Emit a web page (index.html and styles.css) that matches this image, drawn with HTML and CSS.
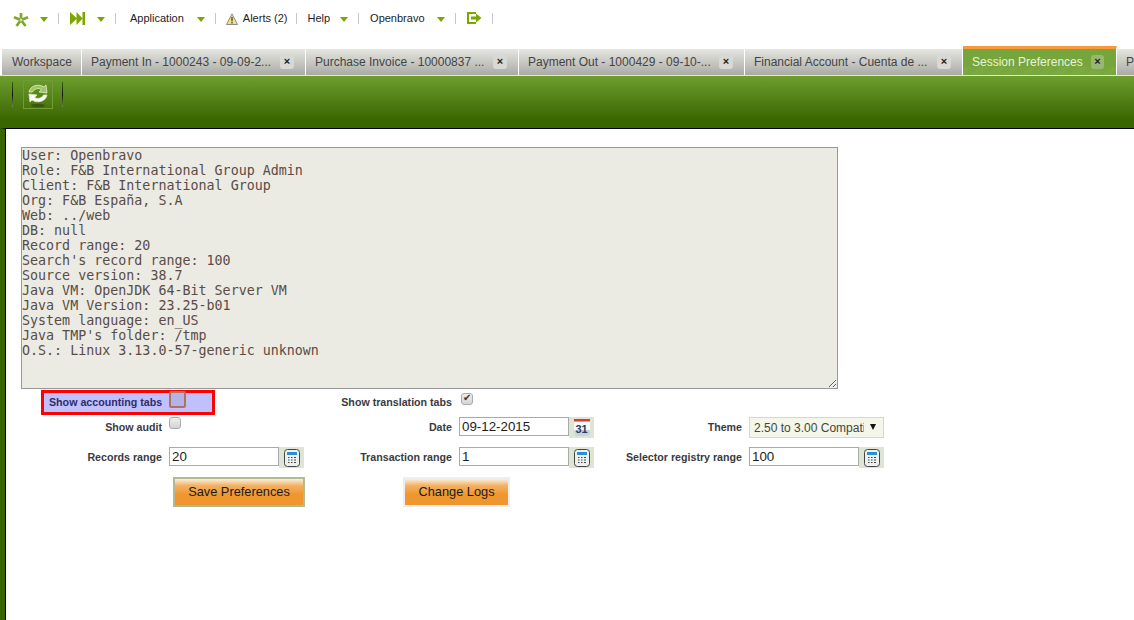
FILE: index.html
```html
<!DOCTYPE html>
<html lang="en">
<head>
<meta charset="UTF-8">
<title>Session Preferences</title>
<link rel="stylesheet" href="styles.css">
</head>
<body>
<nav class="topnav">
  <svg class="ico star" width="16" height="14" viewBox="0 0 16 14"><path d="M8 0v6.500M1 4.200l7 2.800M15 4.200L8 7M3.500 13L8 7M12.500 13L8 7" stroke="#7fa82a" stroke-width="2.700"/><circle cx="8" cy="7" r="1.400" fill="#cfe0a0"/></svg>
  <i class="caret c1"></i><i class="sep s1"></i>
  <svg class="ico ff" width="15" height="13" viewBox="0 0 15 13"><path d="M0 0l7 6.500L0 13zM6.500 0l6 6.500-6 6.500zM12.500 0H15v13h-2.500z" fill="#7ba600"/></svg>
  <i class="caret c2"></i><i class="sep s2"></i>
  <span class="nav-text app">Application</span>
  <i class="caret c3"></i><i class="sep s3"></i>
  <svg class="ico warn" width="12" height="12" viewBox="0 0 12 12"><path d="M6 .8L11.500 11.500H.5z" fill="#f3e08a" stroke="#8c8c80"/><path d="M6 4v4.200M6 9v1.400" stroke="#333" stroke-width="1.200"/></svg>
  <span class="nav-text alerts">Alerts (2)</span>
  <i class="sep s4"></i>
  <span class="nav-text help">Help</span>
  <i class="caret c4"></i><i class="sep s5"></i>
  <span class="nav-text ob">Openbravo</span>
  <i class="caret c5"></i><i class="sep s6"></i>
  <svg class="ico exit" width="15" height="12" viewBox="0 0 15 12"><path d="M9 1H1v10h8" fill="none" stroke="#7ba600" stroke-width="2.200"/><path d="M4 4.500h5V1.500L14.500 6 9 10.500v-3H4z" fill="#7ba600"/></svg>
  <i class="sep s7"></i>
</nav>

<div class="tabs">
  <div class="tab first"><span>Workspace</span></div>
  <div class="tab w1"><span>Payment In - 1000243 - 09-09-2...</span><b class="close">×</b></div>
  <div class="tab w2"><span>Purchase Invoice - 10000837 ...</span><b class="close">×</b></div>
  <div class="tab w3"><span>Payment Out - 1000429 - 09-10-...</span><b class="close">×</b></div>
  <div class="tab w4"><span>Financial Account - Cuenta de ...</span><b class="close">×</b></div>
  <div class="tab active"><span>Session Preferences</span><b class="close">×</b></div>
  <div class="tab last"><span>P</span></div>
</div>

<div class="toolbar">
  <i class="tb-sep"></i>
  <div class="tb-btn">
    <svg width="24" height="26" viewBox="0 0 24 26">
      <ellipse cx="12" cy="23.500" rx="7" ry="1.800" fill="#2d4a10" opacity=".7"/>
      <path d="M3 10C4 4 12 1 18 5l2-2 1 8-8-1 2.500-2.500C12 5.500 8 7 6.500 10z" fill="#9cc564" stroke="#e3efcb" stroke-width=".8"/>
      <path d="M21 13c-1 6-9 9-15 5l-2 2-1-8 8 1-2.500 2.500c3.500 2 7.500.5 9-2.500z" fill="#fff" stroke="#dfeec5" stroke-width=".8"/>
    </svg>
  </div>
  <i class="tb-sep"></i>
</div>

<main class="content">
<textarea class="info" readonly spellcheck="false">User: Openbravo
Role: F&amp;B International Group Admin
Client: F&amp;B International Group
Org: F&amp;B España, S.A
Web: ../web
DB: null
Record range: 20
Search's record range: 100
Source version: 38.7
Java VM: OpenJDK 64-Bit Server VM
Java VM Version: 23.25-b01
System language: en_US
Java TMP's folder: /tmp
O.S.: Linux 3.13.0-57-generic unknown</textarea>

<form class="prefs">
  <div class="hl">
    <label>Show accounting tabs</label>
    <input type="checkbox" class="chk chk-hl">
  </div>
  <label class="lbl">Show translation tabs</label>
  <div class="field"><input type="checkbox" class="chk chk-up" checked></div>
  <div class="filler"></div>

  <label class="lbl low">Show audit</label>
  <div class="field top"><input type="checkbox" class="chk"></div>
  <label class="lbl low">Date</label>
  <div class="field top">
    <input type="text" class="txt" value="09-12-2015">
    <span class="pick">
      <svg width="19" height="19" viewBox="0 0 19 19"><path d="M2 1h16v15H2z" fill="#f6f8fb"/><path d="M2 1h16v2.500H2z" fill="#e0392b"/><path d="M1 13l3-1h14v4l-2 2H4z" fill="#c6d3e4"/><text x="3.500" y="15" class="cal-num">31</text></svg>
    </span>
  </div>
  <label class="lbl low">Theme</label>
  <div class="field top">
    <div class="sel"><select><option>2.50 to 3.00 Compatibility</option></select></div>
  </div>

  <label class="lbl low">Records range</label>
  <div class="field top">
    <input type="text" class="txt" value="20">
    <span class="pick"><svg class="calc" width="16" height="18" viewBox="0 0 16 18"><use href="#calc"/></svg></span>
  </div>
  <label class="lbl low">Transaction range</label>
  <div class="field top">
    <input type="text" class="txt" value="1">
    <span class="pick"><svg class="calc" width="16" height="18" viewBox="0 0 16 18"><use href="#calc"/></svg></span>
  </div>
  <label class="lbl low">Selector registry range</label>
  <div class="field top">
    <input type="text" class="txt" value="100">
    <span class="pick"><svg class="calc" width="16" height="18" viewBox="0 0 16 18"><use href="#calc"/></svg></span>
  </div>

  <div class="actions">
    <button type="button" class="btn save">Save Preferences</button>
    <button type="button" class="btn logs">Change Logs</button>
  </div>
</form>
</main>

<svg width="0" height="0" class="defs">
  <defs>
    <g id="calc">
      <rect x=".5" y=".5" width="15" height="17" rx="3" fill="#eef0f0" stroke="#444"/>
      <rect x="3" y="3" width="10" height="3" fill="#2a8fd8"/>
      <path d="M4 8.500h1.500M7 8.500h1.500M10 8.500h2M4 11h1.500M7 11h1.500M10 11h2M4 13.500h1.500M7 13.500h1.500M10 13.500h2" stroke="#444" stroke-width="1.200"/>
    </g>
  </defs>
</svg>
</body>
</html>
```

FILE: styles.css
```css
*{box-sizing:border-box;}
html,body{height:100%;}
body{margin:0;background:#fff;font-family:"Liberation Sans",Arial,sans-serif;overflow:hidden;display:flex;flex-direction:column;}

/* top menu */
.topnav{height:46px;flex:none;display:flex;align-items:flex-start;padding:12px 0 0 13px;}
.topnav i{display:block;flex:none;}
.ico{display:block;flex:none;}
.star{margin-top:1px;}
.caret{width:0;height:0;border:4.500px solid transparent;border-top:5px solid #7ba600;border-bottom:0;margin:5px 0 0 0;}
.sep{width:1px;height:11px;background:#c8c8c8;margin:1px 0 0 0;}
.nav-text{font-size:11px;line-height:13px;color:#1c1c28;flex:none;}
.c1{margin-left:11px;}
.s1{margin-left:10px;}
.ff{margin-left:11px;}
.c2{margin-left:12px;}
.s2{margin-left:10px;}
.app{margin-left:14px;}
.c3{margin-left:13px;}
.s3{margin-left:10px;}
.warn{margin-left:10px;margin-top:1px;}
.alerts{margin-left:5px;}
.s4{margin-left:9px;}
.help{margin-left:10px;}
.c4{margin-left:10px;}
.s5{margin-left:10px;}
.ob{margin-left:11px;}
.c5{margin-left:12px;}
.s6{margin-left:10px;}
.exit{margin-left:11px;}
.s7{margin-left:10px;}

/* tabs */
.tabs{height:30px;flex:none;display:flex;align-items:flex-end;padding-left:2px;border-bottom:1px solid #dfe8cf;}
.tab{height:26px;display:flex;align-items:center;font-size:12px;color:#444;background:linear-gradient(#e6e6e1,#a9aba3);border-right:1px solid #fff;padding:0 11px 0 9px;flex:none;white-space:nowrap;}
.tab span{flex:1;}
.first{width:80px;padding-left:10px;}
.w1{width:224px;}
.w2{width:213px;}
.w3{width:226px;}
.w4{width:218px;}
.close{width:14px;height:14px;border-radius:3px;background:#d8d8d4;color:#222;font:bold 11px/13px "Liberation Sans",sans-serif;text-align:center;margin-left:8px;}
.active{width:154px;height:29px;background:repeating-linear-gradient(135deg,rgba(255,255,255,.06) 0 1px,transparent 1px 2px) bottom/100% 8px no-repeat,#76a63b;border-top:3px solid #f7983a;color:#eaf3da;padding-right:12px;}
.active .close{background:#97b873;}
.last{flex:1;border-right:0;}

/* toolbar */
.toolbar{height:52px;flex:none;display:flex;align-items:flex-start;padding:4px 0 0 12px;background:linear-gradient(#6d9f2e,#3a6600 85%);}
.tb-sep{display:block;width:1px;height:25px;margin-top:2px;background:linear-gradient(#3a6600,#111 50%,#6d8f3d);}
.tb-btn{width:30px;height:29px;margin:0 9px 0 10px;border:1px solid #6f9c37;display:flex;align-items:center;justify-content:center;}

/* body */
.content{flex:1;background:#fff;border-left:6px solid #3a6600;border-top:1px solid #000;position:relative;padding:18px 0 0 15px;min-height:0;}
.content::before{content:"";position:absolute;left:-1px;top:-1px;bottom:0;width:1px;background:#000;}
.info{display:block;width:817px;height:242px;margin:0;padding:0;border:1px solid #999;background:#ebebe3;color:#5a4c46;font:13.33px/15px "DejaVu Sans Mono",monospace;outline:none;resize:both;}

.prefs{display:grid;grid-template-columns:repeat(3,155px 135px);grid-template-rows:26px 30px 31px 30px;margin:1px 0 0 -7px;}
.lbl{font-size:10.67px;font-weight:bold;color:#3a3a42;text-align:right;padding-right:7px;line-height:24px;white-space:nowrap;}
.low{line-height:23px;}
.hl{grid-column:1 / 3;margin-left:27px;width:174px;height:25px;border:3px solid #f00;background:#c0c0ff;display:flex;align-items:flex-start;padding-left:5px;font-size:10.67px;font-weight:bold;color:#2d2d6b;line-height:18px;white-space:nowrap;}
.hl label{width:113px;text-align:right;}
.filler{grid-column:5 / 7;}
.field{display:flex;align-items:flex-start;}
.top{padding-top:1px;}
.chk{appearance:none;-webkit-appearance:none;width:12px;height:12px;margin:3px 0 0 2px;border:1px solid #ababab;border-radius:3px;background:linear-gradient(#eee,#d4d4d4);position:relative;}
.top .chk{margin-top:0;margin-left:0;}
.chk-up{margin-top:3px;}
.chk:checked::after{content:"✔";position:absolute;left:1px;top:-2px;font:10px/12px "DejaVu Sans",sans-serif;color:#333;}
.chk-hl{width:17px;height:17px;margin:-2px 0 0 7px;border:2px solid #b2705f;border-radius:2px;background:#b3b3e6;}
.txt{width:110px;height:19px;margin:0;padding:0 2px;border:1px solid #aaa;background:#fff;font:13.33px "Liberation Sans",sans-serif;color:#1c1c1c;outline:none;}
.pick{width:25px;height:21px;background:#dfe5d3;display:flex;align-items:center;justify-content:center;}
.cal-num{font:bold 11px "Liberation Sans",sans-serif;fill:#2a3c5a;}
.sel{width:135px;height:21px;border:1px solid #d4dbc1;background:#f3f6e9;position:relative;overflow:hidden;}
.sel select{appearance:none;-webkit-appearance:none;width:114px;height:19px;border:0;background:transparent;padding:0 0 0 4px;font:12px "Liberation Sans",sans-serif;color:#444;outline:none;}
.sel::after{content:"";position:absolute;right:7px;top:6px;border:3.500px solid transparent;border-top:6px solid #111;border-bottom:0;}

.actions{grid-column:1 / -1;display:flex;align-items:flex-start;padding-left:159px;}
.btn{width:132px;height:30px;padding:0 0 2px;border:2px solid #b0bb8f;background:linear-gradient(#f8f0e0,#f3b266 25%,#f0962e 60%);font:12.8px "Liberation Sans",sans-serif;color:#1a1a1a;}
.logs{width:107px;margin-left:98px;border-color:#eeeeea;}
.defs{position:absolute;}
```
